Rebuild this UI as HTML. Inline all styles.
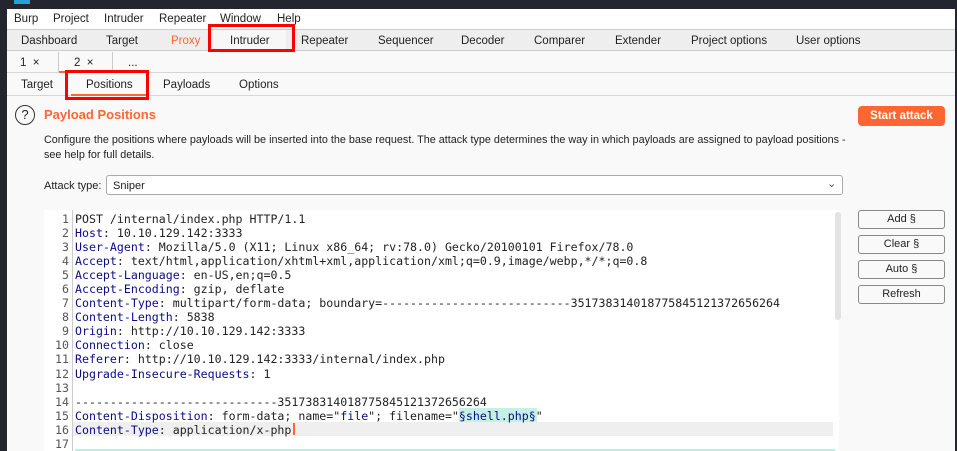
<!DOCTYPE html>
<html><head><meta charset="utf-8"><style>
*{margin:0;padding:0;box-sizing:border-box}
body{width:957px;height:451px;overflow:hidden;background:#23262e;font-family:"Liberation Sans",sans-serif;font-size:11.5px;color:#222;position:relative}
.a{position:absolute;white-space:nowrap}
#win{position:absolute;left:7px;top:9px;width:968px;height:442px;background:#f9f9f9}
#menu{position:absolute;left:7px;top:9px;width:968px;height:20px;background:#fff}
#tabs{position:absolute;left:7px;top:29px;width:968px;height:22px;background:#eeeeee;border-top:1px solid #ccc;border-bottom:1px solid #ccc}
#sub1{position:absolute;left:7px;top:51px;width:968px;height:22px;background:#f9f9f9;border-bottom:1px solid #d6d6d6}
#sub2{position:absolute;left:7px;top:73px;width:968px;height:23px;background:#f9f9f9;border-bottom:1px solid #d6d6d6}
.red{position:absolute;border:3px solid #f00}
.code{position:absolute;left:44px;top:210px;width:795px;height:241px;background:#fff}
.ln{position:absolute;left:44px;width:25px;text-align:right;font-family:"DejaVu Sans Mono",monospace;font-size:11.6px;color:#555}
.cl{position:absolute;left:75px;font-family:"DejaVu Sans Mono",monospace;font-size:11.6px;color:#222;white-space:pre}
.k{color:#0b0b8a}
.btn{position:absolute;left:858px;width:87px;height:19px;border:1px solid #888;border-radius:3px;background:#f9f9f9;text-align:center;line-height:17px;font-size:11px}
</style></head><body>
<div id="win"></div>
<div style="position:absolute;left:14px;top:0;width:16px;height:4px;background:#2a9fd6"></div>
<div id="menu"></div>
<div class="a" style="left:14px;top:13px">Burp</div>
<div class="a" style="left:53px;top:13px">Project</div>
<div class="a" style="left:104px;top:13px">Intruder</div>
<div class="a" style="left:159px;top:13px">Repeater</div>
<div class="a" style="left:220px;top:13px">Window</div>
<div class="a" style="left:277px;top:13px">Help</div>
<div id="tabs"></div>
<div style="position:absolute;left:213px;top:30px;width:73px;height:20px;background:#f7f7f7"></div>
<div class="a" style="left:21px;top:35px">Dashboard</div>
<div class="a" style="left:106px;top:35px">Target</div>
<div class="a" style="left:171px;top:35px;color:#ff6633">Proxy</div>
<div class="a" style="left:230px;top:35px">Intruder</div>
<div class="a" style="left:301px;top:35px">Repeater</div>
<div class="a" style="left:378px;top:35px">Sequencer</div>
<div class="a" style="left:461px;top:35px">Decoder</div>
<div class="a" style="left:534px;top:35px">Comparer</div>
<div class="a" style="left:615px;top:35px">Extender</div>
<div class="a" style="left:691px;top:35px">Project options</div>
<div class="a" style="left:796px;top:35px">User options</div>
<div id="sub1"></div>
<div style="position:absolute;left:58px;top:52px;width:1px;height:20px;background:#ccc"></div>
<div style="position:absolute;left:112px;top:52px;width:1px;height:20px;background:#ccc"></div>
<div style="position:absolute;left:59px;top:71px;width:53px;height:2px;background:#ff6633"></div>
<div class="a" style="left:20px;top:57px">1 &nbsp;×</div>
<div class="a" style="left:74px;top:57px">2 &nbsp;×</div>
<div class="a" style="left:128px;top:57px">...</div>
<div id="sub2"></div>
<div style="position:absolute;left:71px;top:94px;width:77px;height:2px;background:#ff6633"></div>
<div class="a" style="left:21px;top:79px">Target</div>
<div class="a" style="left:86px;top:79px">Positions</div>
<div class="a" style="left:163px;top:79px">Payloads</div>
<div class="a" style="left:239px;top:79px">Options</div>
<div class="red" style="left:208px;top:24px;width:87px;height:28px"></div>
<div class="red" style="left:65px;top:70px;width:84px;height:30px"></div>
<div style="position:absolute;left:15px;top:105px;width:20px;height:20px;border:1.5px solid #333;border-radius:50%;text-align:center;line-height:17px;font-size:13px">?</div>
<div class="a" style="left:44px;top:107px;color:#ff6633;font-weight:bold;font-size:13px">Payload Positions</div>
<div style="position:absolute;left:858px;top:106px;width:87px;height:20px;background:#ff6633;border-radius:4px;color:#fff;font-weight:bold;text-align:center;line-height:20px;font-size:11.5px">Start attack</div>
<div class="a" style="left:44px;top:134px;font-size:10.8px">Configure the positions where payloads will be inserted into the base request. The attack type determines the way in which payloads are assigned to payload positions -</div>
<div class="a" style="left:44px;top:149px;font-size:10.8px">see help for full details.</div>
<div class="a" style="left:44px;top:180px;font-size:11px">Attack type:</div>
<div style="position:absolute;left:106px;top:175px;width:737px;height:20px;background:#fff;border:1px solid #aaa;border-radius:3px"></div>
<div class="a" style="left:113px;top:180px;font-size:11px">Sniper</div>
<div class="a" style="left:827px;top:177px;font-size:11px;color:#555">⌄</div>
<div class="code"></div>
<div style="position:absolute;left:72px;top:210px;width:1px;height:241px;background:#ccc"></div>
<div style="position:absolute;left:73px;top:422px;width:760px;height:14px;background:#efefef"></div>
<div style="position:absolute;left:75px;top:449px;width:760px;height:2px;background:#bdeee0"></div>
<div style="position:absolute;left:835px;top:212px;width:6px;height:108px;background:#e3e3e3;border-radius:3px"></div>
<div style="position:absolute;left:459px;top:408px;width:78px;height:14px;background:#c6f0e4"></div>
<div style="position:absolute;left:293px;top:423px;width:2px;height:12px;background:#ff6633"></div>
<div class="ln" style="top:212px;line-height:14.05px">1<br>2<br>3<br>4<br>5<br>6<br>7<br>8<br>9<br>10<br>11<br>12<br>13<br>14<br>15<br>16<br>17</div>
<div class="cl" style="top:212px;line-height:14.05px">POST /internal/index.php HTTP/1.1
<span class="k">Host</span>: 10.10.129.142:3333
<span class="k">User-Agent</span>: Mozilla/5.0 (X11; Linux x86_64; rv:78.0) Gecko/20100101 Firefox/78.0
<span class="k">Accept</span>: text/html,application/xhtml+xml,application/xml;q=0.9,image/webp,*/*;q=0.8
<span class="k">Accept-Language</span>: en-US,en;q=0.5
<span class="k">Accept-Encoding</span>: gzip, deflate
<span class="k">Content-Type</span>: multipart/form-data; boundary=---------------------------351738314018775845121372656264
<span class="k">Content-Length</span>: 5838
<span class="k">Origin</span>: http://10.10.129.142:3333
<span class="k">Connection</span>: close
<span class="k">Referer</span>: http://10.10.129.142:3333/internal/index.php
<span class="k">Upgrade-Insecure-Requests</span>: 1

-----------------------------351738314018775845121372656264
<span class="k">Content-Disposition</span>: form-data; name="<span class="k">file</span>"; filename="<span class="k">§shell.php§</span>"
<span class="k">Content-Type</span>: application/x-php
</div>
<div class="btn" style="top:210px">Add §</div>
<div class="btn" style="top:235px">Clear §</div>
<div class="btn" style="top:260px">Auto §</div>
<div class="btn" style="top:285px">Refresh</div>
<div style="position:absolute;left:955px;top:9px;width:2px;height:442px;background:#23262e"></div>
</body></html>
